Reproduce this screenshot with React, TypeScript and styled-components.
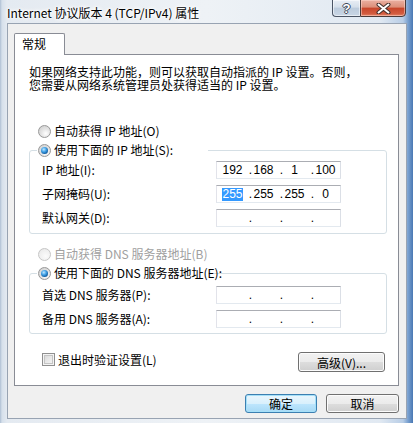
import React from "react";
import styled, { createGlobalStyle } from "styled-components";

const GlobalStyle = createGlobalStyle`
  html, body { margin: 0; padding: 0; background: #ffffff; }
  body { width: 413px; height: 423px; overflow: hidden; }
  * { box-sizing: border-box; }
`;

const UI = `"Noto Sans CJK SC", "Liberation Sans", sans-serif`;

const Window = styled.div`
  width: 413px;
  height: 423px;
  display: flex;
  flex-direction: column;
  font-family: ${UI};
  background: linear-gradient(
    90deg,
    #aebfd3 0,
    #d6e0eb 2px,
    #e4eaf1 7px,
    #eef2f6 50%,
    #e1e9f2 380px,
    #b8cde6 403px,
    #7aa1d0 408px,
    #4a78b3 413px
  );
`;

const TitleBar = styled.div`
  flex: none;
  height: 23px;
  display: flex;
  justify-content: space-between;
  align-items: flex-start;
  padding: 0 7px;
`;

const TitleText = styled.div`
  margin-top: 5px;
  font-size: 12px;
  line-height: 16px;
  color: #000;
  white-space: nowrap;
  text-shadow: 0 0 6px #fff, 0 0 5px #fff, 0 0 3px #fff, 0 0 2px #fff;
`;

const CaptionButtons = styled.div`
  display: flex;
  margin-top: -1px;
  height: 18px;
`;

const HelpButton = styled.div`
  width: 28px;
  height: 18px;
  border: 1px solid #4b5565;
  border-right: none;
  border-bottom-left-radius: 4px;
  background: linear-gradient(#e9eef5 0%, #d5dfea 45%, #bccbdc 50%, #c9d6e5 100%);
  box-shadow: inset 0 0 0 1px rgba(255, 255, 255, 0.55);
  display: flex;
  align-items: center;
  justify-content: center;
  font-family: "Liberation Sans", sans-serif;
  font-weight: bold;
  font-size: 13px;
  color: #fff;
  text-shadow: 1px 0 0 #3c4656, -1px 0 0 #3c4656, 0 1px 0 #3c4656, 0 -1px 0 #3c4656;
`;

const CloseButton = styled.div`
  width: 46px;
  height: 18px;
  border: 1px solid #4b3a38;
  border-bottom-right-radius: 4px;
  background: linear-gradient(#eab0a2 0%, #dc8e78 45%, #c7452a 50%, #d25c40 85%, #e3866a 100%);
  box-shadow: inset 0 0 0 1px rgba(255, 220, 210, 0.5);
  display: flex;
  align-items: center;
  justify-content: center;
`;

const Body = styled.div`
  flex: 1;
  margin: 0 6px 4px 7px;
  border: 1px solid #98a3b2;
  background: #f0f0f0;
  padding: 9px 7px 0 6px;
  display: flex;
  flex-direction: column;
`;

const TabStrip = styled.div`
  display: flex;
`;

const Tab = styled.div`
  position: relative;
  z-index: 1;
  width: 51px;
  height: 22px;
  margin-bottom: -1px;
  border: 1px solid #898c95;
  border-bottom: none;
  border-radius: 2px 2px 0 0;
  background: #fff;
  padding-left: 7px;
  font-size: 12px;
  line-height: 19px;
  color: #000;
`;

const Panel = styled.div`
  height: 332px;
  border: 1px solid #898c95;
  background: #fff;
  padding: 10px 11px 0 14px;
  display: flex;
  flex-direction: column;
`;

const Description = styled.div`
  font-size: 12px;
  line-height: 13px;
  color: #000;
  white-space: nowrap;
`;

const RadioRow = styled.div<{ $mt?: number; $pl?: number; $disabled?: boolean }>`
  display: flex;
  align-items: center;
  height: 16px;
  margin-top: ${(p) => p.$mt ?? 0}px;
  padding-left: ${(p) => p.$pl ?? 9}px;
  font-size: 12px;
  line-height: 16px;
  color: ${(p) => (p.$disabled ? "#a0a0a0" : "#000")};
  white-space: nowrap;
`;

const RadioCircle = styled.span<{ $checked?: boolean; $disabled?: boolean }>`
  flex: none;
  width: 13px;
  height: 13px;
  border-radius: 50%;
  margin-right: 3px;
  border: 1px solid ${(p) => (p.$disabled ? "#c6c6c6" : "#989898")};
  background: ${(p) =>
    p.$disabled
      ? "radial-gradient(circle at 60% 65%, #fbfbfb 0%, #efefef 60%, #e2e2e2 100%)"
      : "radial-gradient(circle at 62% 68%, #ffffff 0%, #e4e4e4 45%, #c9c9c9 100%)"};
  display: flex;
  align-items: center;
  justify-content: center;

  &::after {
    content: "";
    display: ${(p) => (p.$checked ? "block" : "none")};
    width: 7px;
    height: 7px;
    border-radius: 50%;
    background: radial-gradient(circle at 40% 35%, #c4e8ff 0%, #4aa8ea 35%, #1262a8 70%, #0a3b6a 100%);
  }
`;

const Group = styled.fieldset<{ $mt: number; $pt: number; $pb: number }>`
  margin: ${(p) => p.$mt}px 0 0 0;
  padding: ${(p) => p.$pt}px 0 ${(p) => p.$pb}px 0;
  border: 1px solid #d5dfe5;
  border-radius: 3px;
  min-width: 0;
`;

const Legend = styled.legend`
  width: 171px;
  height: 16px;
  margin-left: 7px;
  padding: 0 0 0 1px;
`;

const Rows = styled.div`
  display: flex;
  flex-direction: column;
  gap: 6px;
`;

const FieldRow = styled.div`
  display: grid;
  grid-template-columns: 174px 125px;
  align-items: center;
  height: 18px;
  padding-left: 12px;
`;

const FieldLabel = styled.span`
  font-size: 12px;
  line-height: 18px;
  color: #000;
  white-space: nowrap;
`;

const IpBox = styled.div`
  height: 18px;
  border: 1px solid;
  border-color: #abadb3 #dbdfe6 #e3e9ef #e2e3ea;
  background: #fff;
  display: flex;
  align-items: center;
  padding-left: 4px;
  font-family: "Liberation Sans", Arial, sans-serif;
  font-size: 12px;
  line-height: 14px;
  color: #000;
`;

const Octet = styled.span`
  width: 23px;
  text-align: center;
`;

const Dot = styled.span`
  width: 8px;
  text-align: right;
`;

const Selected = styled.span`
  background: #3399ff;
  color: #fff;
  line-height: 13px;
  display: inline-block;
`;

const OptionsRow = styled.div`
  display: flex;
  justify-content: space-between;
  align-items: flex-start;
  margin-top: 18px;
  padding: 0 2px 0 13px;
`;

const CheckLabel = styled.div`
  display: flex;
  align-items: center;
  height: 14px;
  font-size: 12px;
  color: #000;
  white-space: nowrap;
`;

const CheckBox = styled.span`
  flex: none;
  width: 13px;
  height: 13px;
  margin-right: 3px;
  border: 1px solid #8f8f8f;
  background: linear-gradient(135deg, #d2d2d2 0%, #e8e8e8 50%, #f8f8f8 100%);
  box-shadow: inset 0 0 0 1px #f4f4f4, inset 0 0 0 2px #c4c4c4;
`;

const Button = styled.div<{ $w: number; $h: number; $default?: boolean }>`
  width: ${(p) => p.$w}px;
  height: ${(p) => p.$h}px;
  border: 1px solid ${(p) => (p.$default ? "#3c7fb1" : "#707070")};
  border-radius: 3px;
  background: ${(p) =>
    p.$default
      ? "linear-gradient(#eaf6fd 0%, #d9f0fc 50%, #bee6fd 51%, #a7d9f5 100%)"
      : "linear-gradient(#f2f2f2 0%, #ebebeb 50%, #dddddd 51%, #cfcfcf 100%)"};
  box-shadow: inset 0 0 0 1px ${(p) => (p.$default ? "#a5e0f8" : "#fcfcfc")};
  display: flex;
  align-items: center;
  justify-content: center;
  font-size: 12px;
  color: #000;
  white-space: nowrap;
`;

const ButtonRow = styled.div`
  display: flex;
  justify-content: flex-end;
  gap: 9px;
  margin-top: 8px;
`;

const octets = (vals: string[], selectFirst = false) =>
  vals.map((v, i) => (
    <React.Fragment key={i}>
      {i > 0 && <Dot>.</Dot>}
      <Octet>{i === 0 && selectFirst ? <Selected>{v}</Selected> : v}</Octet>
    </React.Fragment>
  ));

const Field = ({ label, values, select }: { label: string; values: string[]; select?: boolean }) => (
  <FieldRow>
    <FieldLabel>{label}</FieldLabel>
    <IpBox>{octets(values, select)}</IpBox>
  </FieldRow>
);

export default function App() {
  return (
    <>
      <GlobalStyle />
      <Window>
        <TitleBar>
          <TitleText>Internet 协议版本 4 (TCP/IPv4) 属性</TitleText>
          <CaptionButtons>
            <HelpButton>?</HelpButton>
            <CloseButton>
              <svg width="15" height="11" viewBox="0 0 15 11">
                <path d="M2.5 1.5 L12.5 9.5 M12.5 1.5 L2.5 9.5" stroke="#43302c" strokeWidth="4" strokeLinecap="round" />
                <path d="M2.5 1.5 L12.5 9.5 M12.5 1.5 L2.5 9.5" stroke="#ffffff" strokeWidth="2" strokeLinecap="round" />
              </svg>
            </CloseButton>
          </CaptionButtons>
        </TitleBar>
        <Body>
          <TabStrip>
            <Tab>常规</Tab>
          </TabStrip>
          <Panel>
            <Description>
              如果网络支持此功能，则可以获取自动指派的 IP 设置。否则，
              <br />
              您需要从网络系统管理员处获得适当的 IP 设置。
            </Description>

            <RadioRow $mt={32}>
              <RadioCircle />
              自动获得 IP 地址(O)
            </RadioRow>

            <Group $mt={3} $pt={3} $pb={6}>
              <Legend>
                <RadioRow $pl={0}>
                  <RadioCircle $checked />
                  使用下面的 IP 地址(S):
                </RadioRow>
              </Legend>
              <Rows>
                <Field label="IP 地址(I):" values={["192", "168", "1", "100"]} />
                <Field label="子网掩码(U):" values={["255", "255", "255", "0"]} select />
                <Field label="默认网关(D):" values={["", "", "", ""]} />
              </Rows>
            </Group>

            <RadioRow $mt={12} $disabled>
              <RadioCircle $disabled />
              自动获得 DNS 服务器地址(B)
            </RadioRow>

            <Group $mt={3} $pt={5} $pb={5}>
              <Legend>
                <RadioRow $pl={0}>
                  <RadioCircle $checked />
                  使用下面的 DNS 服务器地址(E):
                </RadioRow>
              </Legend>
              <Rows>
                <Field label="首选 DNS 服务器(P):" values={["", "", "", ""]} />
                <Field label="备用 DNS 服务器(A):" values={["", "", "", ""]} />
              </Rows>
            </Group>

            <OptionsRow>
              <CheckLabel>
                <CheckBox />
                退出时验证设置(L)
              </CheckLabel>
              <Button $w={87} $h={20}>
                高级(V)...
              </Button>
            </OptionsRow>
          </Panel>
          <ButtonRow>
            <Button $w={72} $h={19} $default>
              确定
            </Button>
            <Button $w={73} $h={19}>
              取消
            </Button>
          </ButtonRow>
        </Body>
      </Window>
    </>
  );
}
